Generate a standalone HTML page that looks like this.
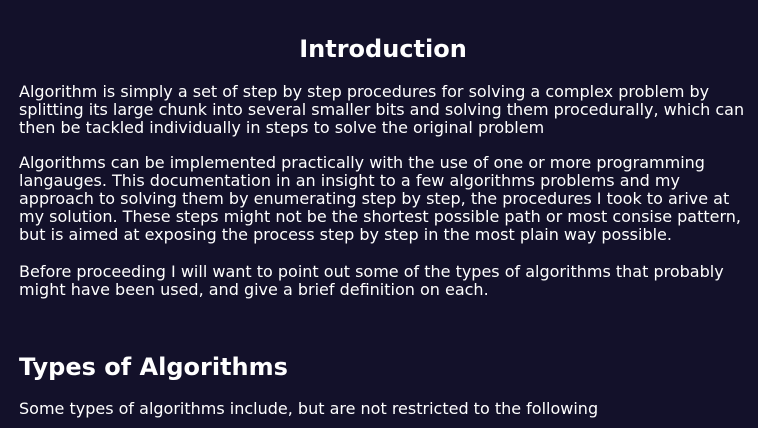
<!DOCTYPE html>
<html><head><style>
html,body{margin:0;padding:0;background:#13112a;width:758px;height:428px;overflow:hidden}
body{font-family:"DejaVu Sans",sans-serif;color:#fff;position:relative}
.a{position:absolute;left:19px;white-space:nowrap;font-size:16px;line-height:18px}
h1,h2{position:absolute;margin:0;font-weight:bold;font-size:24px;line-height:30px;white-space:nowrap}
</style></head><body>
<h1 style="left:0;width:766px;text-align:center;top:34px">Introduction</h1>
<div class="a" style="top:83px">Algorithm is simply a set of step by step procedures for solving a complex problem by<br>splitting its large chunk into several smaller bits and solving them procedurally, which can<br>then be tackled individually in steps to solve the original problem</div>
<div class="a" style="top:154px">Algorithms can be implemented practically with the use of one or more programming<br>langauges. This documentation in an insight to a few algorithms problems and my<br>approach to solving them by enumerating step by step, the procedures I took to arive at<br>my solution. These steps might not be the shortest possible path or most consise pattern,<br>but is aimed at exposing the process step by step in the most plain way possible.</div>
<div class="a" style="top:263px">Before proceeding I will want to point out some of the types of algorithms that probably<br>might have been used, and give a brief definition on each.</div>
<h2 style="left:19px;top:352px">Types of Algorithms</h2>
<div class="a" style="top:400px">Some types of algorithms include, but are not restricted to the following</div>
</body></html>
